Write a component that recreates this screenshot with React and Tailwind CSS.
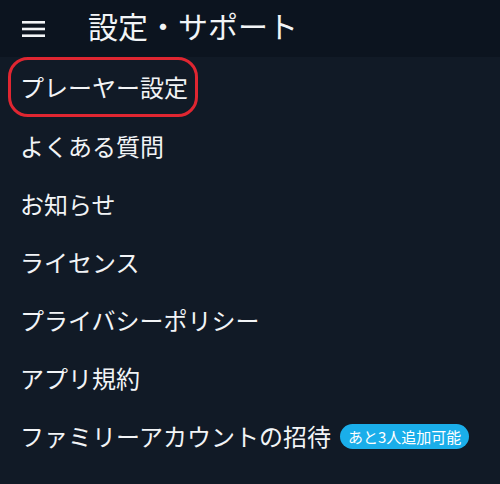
const items = [
  'よくある質問',
  'お知らせ',
  'ライセンス',
  'プライバシーポリシー',
  'アプリ規約',
];

export default function App() {
  return (
    <div
      className="w-[500px] h-[484px] bg-[#111a26] text-[#f2f4f6] overflow-hidden"
      style={{ fontFamily: '"Noto Sans CJK JP", "Noto Sans", sans-serif' }}
    >
      {/* Header */}
      <div className="h-[57px] bg-[#0c141f] flex items-center">
        <div className="w-[88px] pl-[22px] flex">
          <svg width="24" height="16" viewBox="0 0 24 16" fill="none">
            <rect x="0" y="0" width="23" height="2.6" fill="#f2f4f6" />
            <rect x="0" y="6.7" width="23" height="2.6" fill="#f2f4f6" />
            <rect x="0" y="13.4" width="23" height="2.6" fill="#f2f4f6" />
          </svg>
        </div>
        <h1 className="text-[30px] leading-none mb-[8px]">設定・サポート</h1>
      </div>

      {/* Menu */}
      <div className="flex flex-col">
        <div className="h-[60px] flex items-center pl-[8px]">
          <div className="h-[60px] w-[190px] border-[3px] border-[#e02631] rounded-[20px] flex items-center pl-[9px]">
            <span className="text-[24px] leading-none">プレーヤー設定</span>
          </div>
        </div>
        {items.map((t) => (
          <div key={t} className="h-[58px] flex items-center pl-[20px]">
            <span className="text-[24px] leading-none">{t}</span>
          </div>
        ))}
        <div className="h-[58px] flex items-center pl-[20px] gap-[9px]">
          <span className="text-[24px] leading-none">ファミリーアカウントの招待</span>
          <span className="bg-[#1aaeea] text-white text-[15px] leading-none rounded-full px-[8px] py-[5px]">
            あと3人追加可能
          </span>
        </div>
      </div>
    </div>
  );
}
